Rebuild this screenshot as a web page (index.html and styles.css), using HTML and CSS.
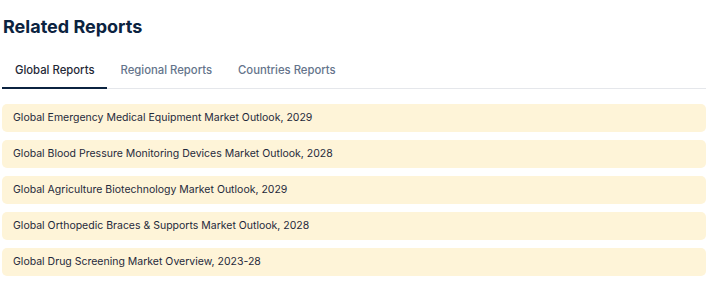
FILE: index.html
```html
<!DOCTYPE html>
<html lang="en">
<head>
    <meta charset="UTF-8">
    <meta name="viewport" content="width=device-width, initial-scale=1.0">
    <title>Related Reports</title>
    <link rel="stylesheet" href="styles.css">
</head>
<body>
    <div class="related">
        <h2 class="titulo">Related Reports</h2>
        <div class="tabs">
            <button class="tab activo">Global Reports</button>
            <button class="tab">Regional Reports</button>
            <button class="tab">Countries Reports</button>
        </div>
        <ul class="lista">
            <li class="reporte">Global Emergency Medical Equipment Market Outlook, 2029</li>
            <li class="reporte">Global Blood Pressure Monitoring Devices Market Outlook, 2028</li>
            <li class="reporte">Global Agriculture Biotechnology Market Outlook, 2029</li>
            <li class="reporte">Global Orthopedic Braces &amp; Supports Market Outlook, 2028</li>
            <li class="reporte">Global Drug Screening Market Overview, 2023-28</li>
        </ul>
    </div>
</body>
</html>
```

FILE: styles.css
```css
*{
    margin: 0px;
    padding: 0px;
    box-sizing: border-box;
}
body{
    font-family: Inter, "Noto Sans", sans-serif;
    background: #fff;
}
.related{
    padding: 15px 6px 0px 2px;
}
.titulo{
    font-size: 18px;
    font-weight: 700;
    color: #0b2340;
    line-height: 24px;
    padding-left: 1px;
}
.tabs{
    display: flex;
    margin-top: 22px;
    border-bottom: 1px solid #e5e7eb;
}
.tab{
    background: none;
    border: none;
    font-family: Inter, "Noto Sans", sans-serif;
    font-size: 11.3px;
    font-weight: 500;
    color: #64748b;
    padding: 0px 13px 8px 13px;
    line-height: 18px;
    border-bottom: 2px solid transparent;
    margin-bottom: -1px;
}
.tab.activo{
    color: #1f2937;
    border-bottom-color: #0b2340;
}
.lista{
    list-style: none;
    display: flex;
    flex-direction: column;
    gap: 8px;
    margin-top: 15px;
}
.reporte{
    background: #fef4d8;
    border-radius: 5px;
    height: 28px;
    line-height: 28px;
    padding: 0px 11px;
    font-size: 10.5px;
    color: #1e293b;
}
```
